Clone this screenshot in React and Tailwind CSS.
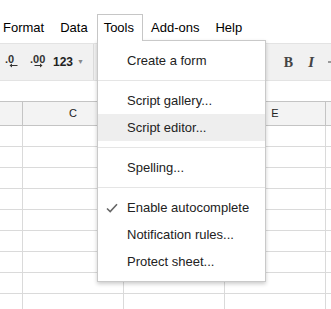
import { useState } from "react";

const menuBar = ["Format", "Data", "Tools", "Add-ons", "Help"];

const toolsMenu = [
  { label: "Create a form" },
  { sep: true },
  { label: "Script gallery..." },
  { label: "Script editor...", active: true },
  { sep: true },
  { label: "Spelling..." },
  { sep: true },
  { label: "Enable autocomplete", checked: true },
  { label: "Notification rules..." },
  { label: "Protect sheet..." },
];

const columns = [
  { label: "", width: "w-[23px]" },
  { label: "C", width: "w-[101px]" },
  { label: "", width: "w-[101px]" },
  { label: "E", width: "w-[101px]" },
  { label: "", width: "w-[30px]" },
];

const rows = Array.from({ length: 9 });

const Arrow = ({ dir }) => (
  <svg width="9" height="5" viewBox="0 0 9 5" className="absolute left-[4px] top-[9px]">
    {dir === "left" ? (
      <path d="M0.5 2.5 L3 0.5 L3 4.5 Z M3 2 H8.5 V3 H3 Z" fill="#333" />
    ) : (
      <path d="M8.5 2.5 L6 0.5 L6 4.5 Z M0.5 2 H6 V3 H0.5 Z" fill="#333" />
    )}
  </svg>
);

const App = () => {
  const [open] = useState(true);

  return (
    <div className="relative h-[309px] w-[331px] overflow-hidden bg-white font-['Liberation_Sans',Arial,sans-serif]">
      {/* menu bar */}
      <div className="flex h-[43px] items-start pt-[14px] text-[13px] text-[#000]">
        <div className="-ml-[4px] flex gap-[1px]">
          {menuBar.map((item) => (
            <div
              key={item}
              className={
                item === "Tools" && open
                  ? "relative z-20 flex h-[27px] items-center border-x border-t border-[#c6c6c6] bg-white pl-[6px] pr-[8px]"
                  : "flex h-[27px] items-center border border-transparent pl-[6px] pr-[7px]"
              }
            >
              {item}
            </div>
          ))}
        </div>
      </div>

      {/* toolbar */}
      <div className="flex h-[38px] items-center border-y border-[#e3e3e3] bg-[#f1f1f1] text-[#333]">
        <div className="relative ml-[5px] h-[16px] w-[16px] text-[11px] font-bold leading-[11px]">
          <span className="absolute left-0 top-0">.0</span>
          <Arrow dir="left" />
        </div>
        <div className="relative ml-[9px] h-[16px] w-[20px] text-[11px] font-bold leading-[11px]">
          <span className="absolute left-0 top-0">.00</span>
          <Arrow dir="right" />
        </div>
        <div className="ml-[3px] flex items-center text-[12px] font-bold text-[#222]">
          123
          <span className="ml-[4px] text-[7px] font-normal text-[#888]">▼</span>
        </div>
        <div className="ml-[9px] h-full w-px bg-[#dcdcdc]" />
        <div className="flex-1" />
        <span className="mr-[15px] font-['Liberation_Serif',serif] text-[14px] font-bold text-[#444]">B</span>
        <span className="mr-[14px] font-['Liberation_Serif',serif] text-[15px] font-bold italic text-[#444]">I</span>
        <svg width="3" height="2" viewBox="0 0 3 2" className="shrink-0">
          <rect x="0" y="0.5" width="3" height="1" fill="#444" />
        </svg>
      </div>

      {/* formula strip */}
      <div className="h-[20px] bg-white" />

      {/* grid */}
      <div className="flex h-[25px] border-y border-[#c4c4c4] bg-[#f3f3f3] text-[11px] text-[#222]">
        {columns.map((col, i) => (
          <div
            key={i}
            className={`${col.width} flex shrink-0 items-center justify-center border-r border-[#c4c4c4]`}
          >
            {col.label}
          </div>
        ))}
      </div>
      {rows.map((_, r) => (
        <div key={r} className="flex h-[21px] border-b border-[#dadada]">
          {columns.map((col, i) => (
            <div key={i} className={`${col.width} shrink-0 border-r border-[#dadada]`} />
          ))}
        </div>
      ))}

      {/* tools dropdown */}
      {open && (
        <div className="absolute left-[97px] top-[40px] z-10 w-[169px] border border-[#c9c9c9] bg-white py-[6px] text-[13px] text-[#222] shadow-[0_2px_4px_rgba(0,0,0,0.2)]">
          {toolsMenu.map((item, i) =>
            item.sep ? (
              <div key={i} className="my-[6px] h-px bg-[#e5e5e5]" />
            ) : (
              <div
                key={i}
                className={`relative flex h-[27px] items-center pl-[29px] ${item.active ? "bg-[#eeeeee]" : ""}`}
              >
                {item.checked && (
                  <svg width="12" height="10" viewBox="0 0 12 10" className="absolute left-[8px] top-[9px]">
                    <path d="M1 5.5 L4.2 8.5 L11 1.2" fill="none" stroke="#666" strokeWidth="1.6" />
                  </svg>
                )}
                {item.label}
              </div>
            )
          )}
        </div>
      )}
    </div>
  );
};

export default App;
